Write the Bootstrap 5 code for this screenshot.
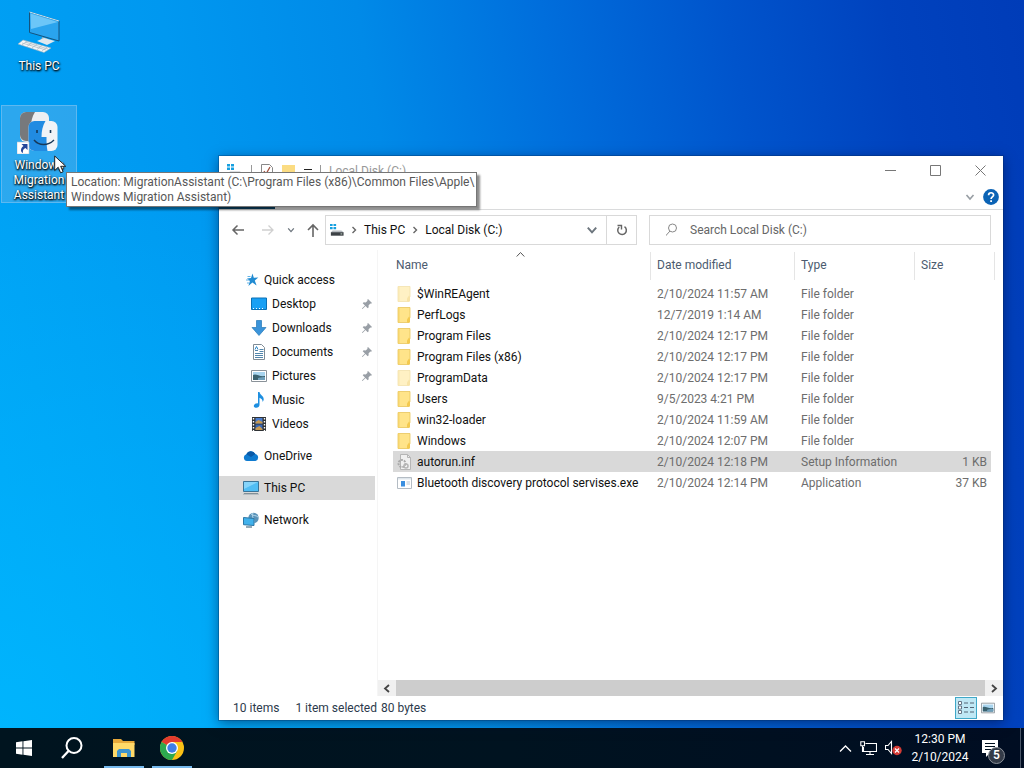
<!DOCTYPE html>
<html lang="en">
<head>
<meta charset="utf-8">
<meta name="viewport" content="width=device-width, initial-scale=1">
<title>Local Disk (C:)</title>
<link href="https://cdn.jsdelivr.net/npm/bootstrap@5.3.0/dist/css/bootstrap.min.css" rel="stylesheet">
<style>
:root{--ui:Roboto,"Open Sans",sans-serif}
body{font-family:var(--ui);font-size:12px;line-height:16px;color:#111;background:#0070d8;cursor:default}
button,input{font:inherit;color:inherit}
.plain{border:0;background:none;padding:0}
svg{display:block;flex:none}
a{color:inherit;text-decoration:none}
.desktop{background:
 radial-gradient(ellipse 65% 80% at 0% 100%,rgba(0,186,255,.75),rgba(0,186,255,0) 100%),
 linear-gradient(80deg,#00a4f6 0%,#0098f0 25%,#008ae8 42%,#006edc 58%,#0054cc 74%,#0042be 88%,#003cb8 100%)}
.launcher{width:76px;margin:0 0 0 1px;padding:6px 0 0;height:98px;border:1px solid transparent;color:#fff;line-height:15px;text-shadow:0 1px 2px #000,1px 1px 2px #000;text-align:center;display:flex;flex-direction:column;align-items:center;gap:4px}
.launcher:first-child{margin-top:4px;gap:6px}
.launcher.chosen{margin-top:3px;border-color:#5db8f0;background:rgba(110,180,230,.4)}
.explorer{left:219px;right:21px;top:156px;bottom:8px;background:#fff;box-shadow:0 0 0 1px rgba(0,40,90,.3),0 3px 12px rgba(0,10,50,.5)}
.caption-bar{height:29px;color:#999}
.caption-bar .sys{width:45px;height:28px}
.ribbon{height:25px;border-bottom:1px solid #dadbdc}
.file-tab{width:56px;background:#0b4a70}
.tools{height:40px}
.address,.search{height:30px;border:1px solid #d9d9d9}
.address{width:312px}
.search{min-width:0;margin:0 12px}
.search input{border:0;outline:0;background:none;min-width:0}
.search input::placeholder{color:#666;opacity:1}
.reload{width:30px;border-left:1px solid #d9d9d9!important}
.side{width:159px;border-right:1px solid #f5f5f5;padding-top:18px}
.side a{height:24px;width:156px;padding-left:24px;gap:5px}
.side a.sub{padding-left:32px}
.side a.here{background:#d9d9d9}
.side .pin{margin-left:auto;margin-right:2px}
.files{margin:0 12px 0 15px;padding-top:2px}
.files table{table-layout:fixed;width:100%;border-collapse:separate;border-spacing:0}
.files th{height:28px;font-weight:400;color:#4c5b6f;padding:0 0 2px 6px;border-left:1px solid #e5e5e5;line-height:16px}
.files th:first-child{padding-left:3px;border-left:0;position:relative}
.files th:last-child{position:relative}
.files th:last-child::after{content:"";position:absolute;right:-4px;top:0;height:28px;border-right:1px solid #e5e5e5}
.sort{position:absolute;left:123px;top:0}
.files td{height:21px;padding:0 0 0 7px;color:#6d6d6d;white-space:nowrap}
.files td:first-child{color:#111;padding-left:3px}
.files td:last-child{text-align:right;padding-right:4px}
.files tr.picked td{background:#d9d9d9}
.files tbody::before{content:"";display:block;height:3px}
.scroller{height:16px;background:#f0f0f0}
.scroller .thumb{background:#cdcdcd}
.scroller button{width:18px}
.foot{height:24px;color:#2c3a4c;padding-left:14px}
.view{width:22px;height:22px}
.view.on{border:1px solid #3fa8c8;background:#bfe8f5}
.tip{left:66px;top:172px;width:411px;height:35px;background:#fff;border:1px solid #767676;color:#575757;padding:2px 4px;line-height:15px;box-shadow:3px 3px 2px rgba(0,0,0,.45);z-index:3}
.pointer{left:54px;top:155px;z-index:4}
.taskbar{height:40px;background:linear-gradient(90deg,#00141f,#001320 50%,#000d22);color:#fff}
.task{width:40px;height:40px;display:flex;align-items:center;justify-content:center}
.task.open{box-shadow:inset 0 -2px #76b9ed}
.clock{line-height:18px;text-align:center;width:60px}
.note{position:relative;width:34px;height:40px}
.tally{position:absolute;left:10px;top:19px;width:17px;height:17px;border-radius:50%;background:#333b48;border:1px solid #8c929a;line-height:15px;text-align:center;font-weight:600}
.peek{border-left:1px solid #4a5668;width:4px;height:40px}
</style>
</head>
<body class="vh-100 overflow-hidden d-flex flex-column">

<svg width="0" height="0" class="position-absolute" aria-hidden="true">
 <symbol id="folder" viewBox="0 0 16 16"><path d="M1.500 .5h12v10l-1 1v4h-11z" fill="#ffe48a" stroke="#e8c55c" stroke-width=".8"/><path d="M1.500 .5h1.500v15H1.500z" fill="#f5d36b"/><path d="M12.500 9.500l1 1v5h-3v-3z" fill="#f3c94f"/></symbol>
 <symbol id="chev" viewBox="0 0 8 8"><path d="M2.500 1l3 3-3 3" fill="none" stroke="#666" stroke-width="1.400"/></symbol>
 <symbol id="down" viewBox="0 0 10 10"><path d="M1.500 3l3.500 4 3.500-4" fill="none" stroke="currentColor" stroke-width="1.600"/></symbol>
 <symbol id="pin" viewBox="0 0 12 12"><path d="M7 1l4 4-1 .8-.7-.2L7.500 7.400l.2 1.900-1 1L4.500 8 1.500 11l-.6-.5L4 7.500 1.700 5.200l1-.9 2 .2 1.900-1.800L6.200 1.900z" fill="#999fa6"/></symbol>
 <symbol id="drive" viewBox="0 0 16 16"><path d="M0 1h3v2.500H0zM4 1h3v2.500H4zM0 4.500h3V7H0zM4 4.500h3V7H4z" fill="#16a0e0"/><path d="M3 8.500h10l2.500 2H1z" fill="#b6bbc0"/><path d="M1 10.500h14.500v4H1z" fill="#3c4145"/><path d="M12 12h2v1h-2z" fill="#d8eadb"/></symbol>
 <symbol id="photo" viewBox="0 0 16 12"><path d="M.5.500h15v11H.5z" fill="#fff" stroke="#8a9299"/><path d="M2 2h12v8H2z" fill="#a8d4ee"/><path d="M2 5c3-2 6 2 12 1v4H2z" fill="#39616f"/><path d="M7 8c3-1 5-1 7-1v3H7z" fill="#6d9eba"/></symbol>
</svg>

<main class="desktop flex-grow-1 position-relative d-flex flex-column">
 <button class="plain launcher">
  <svg width="44" height="42" viewBox="0 0 44 42"><path d="M12.500 1l29.500 9v20l-29.500-8.500z" fill="#2aa4ee" stroke="#14537e"/><path d="M13.500 2.500l27.500 8.500L14 18z" fill="#6cc6f8"/><path d="M12.500 1l29.500 9" stroke="#c8e8f8"/><path d="M25 26l6 2v3l-7-1z" fill="#9fb0ba"/><path d="M20 30l7-3 11 3-8 4z" fill="#dfe8ee"/><path d="M1 33l5-4 28 8-7 4.500z" fill="#f5f7f8" stroke="#9bb0bf" stroke-width=".6"/><path d="M5 32l24 7M8 31l23 7M10 30l-5 4M15 31.500l-5 4M20 33l-5 4M25 34.500l-5 4M30 36l-5 4" stroke="#a7b6c0" stroke-width=".7"/></svg>
  <span>This PC</span></button>
 <button class="plain launcher chosen">
  <svg width="44" height="42" viewBox="0 0 44 42"><rect x="3" y="0" width="29" height="30" rx="6" fill="#eceff2"/><path d="M9 0h9c-3 5-4 9-4 15h4v14H9a6 6 0 0 1-6-6V6a6 6 0 0 1 6-6z" fill="#77797c"/><rect x="11.500" y="9" width="29" height="30" rx="6" fill="#f0f3f7"/><path d="M17.500 9h11c-3 5-4 10-4 16h5c0 5 0 9 1 14H17.500a6 6 0 0 1-6-6V15a6 6 0 0 1 6-6z" fill="#218be2"/><path d="M20 18v3M33.500 18v3" stroke="#173858" stroke-width="1.600"/><path d="M17 28c5 6 14 6 20 0" fill="none" stroke="#173858" stroke-width="1.400"/><path d="M0 30h12v12H0z" fill="#fff" stroke="#b5c0cc" stroke-width=".6"/><path d="M4.500 32h6v6l-2-2c-2 1-3 2-2.500 5C3 40 3.500 36 6.500 34z" fill="#24469a"/></svg>
  <span>Windows<br>Migration<br>Assistant</span></button>

 <section class="explorer position-absolute d-flex flex-column" aria-label="Local Disk (C:)">
  <header class="caption-bar d-flex align-items-center">
   <svg class="ms-2" width="16" height="16"><use href="#drive"/></svg>
   <svg class="ms-2" width="1" height="12"><path d="M0 0h1v12H0z" fill="#999"/></svg>
   <svg class="ms-2" width="14" height="16" viewBox="0 0 14 16"><path d="M1.500 1.500h8l3 3v10h-11z" fill="#fff" stroke="#888"/><path d="M4 8l2 3 4-7" fill="none" stroke="#a34f3c" stroke-width="1.300"/></svg>
   <svg class="ms-2" width="14" height="14" viewBox="0 0 14 14"><path d="M0 1h13v12H0z" fill="#fbdc82"/></svg>
   <svg class="ms-2" width="8" height="8" viewBox="0 0 8 8"><path d="M0 2h8v1H0zM1 5h6L4 8z" fill="#222"/></svg>
   <svg class="ms-2" width="1" height="12"><path d="M0 0h1v12H0z" fill="#999"/></svg>
   <span class="ms-2">Local Disk (C:)</span>
   <div class="ms-auto d-flex">
    <button class="plain sys" aria-label="Minimize"><svg class="m-auto" width="11" height="11"><path d="M0 5.500h11" stroke="#777"/></svg></button>
    <button class="plain sys" aria-label="Maximize"><svg class="m-auto" width="11" height="11"><path d="M.5.500h10v10H.5z" fill="none" stroke="#777"/></svg></button>
    <button class="plain sys" aria-label="Close"><svg class="m-auto" width="11" height="11"><path d="M.5.500l10 10M10.500.500l-10 10" stroke="#777"/></svg></button>
   </div>
  </header>
  <div class="ribbon d-flex">
   <div class="file-tab"></div>
   <div class="ms-auto d-flex align-items-center gap-2 pe-1">
    <button class="plain text-secondary" aria-label="Expand ribbon"><svg width="10" height="10" opacity=".7"><use href="#down"/></svg></button>
    <button class="plain" aria-label="Help"><svg width="16" height="16" viewBox="0 0 16 16"><circle cx="8" cy="8" r="7.900" fill="#0b63b5"/><path d="M5.600 6.200c0-3.200 5-3.200 5-.2 0 2-2.500 1.900-2.500 4" fill="none" stroke="#fff" stroke-width="1.700"/><path d="M7.200 11.200h1.800V13H7.200z" fill="#fff"/></svg></button>
   </div>
  </div>
  <div class="tools d-flex align-items-center">
   <button class="plain ms-2 ps-1" aria-label="Back"><svg width="14" height="14" viewBox="0 0 14 14"><path d="M13 7H2M6.500 2.500L2 7l4.500 4.500" fill="none" stroke="#666" stroke-width="1.500"/></svg></button>
   <button class="plain ms-3" aria-label="Forward"><svg width="14" height="14" viewBox="0 0 14 14"><path d="M1 7h11M7.500 2.500L12 7l-4.500 4.500" fill="none" stroke="#d0d0d0" stroke-width="1.300"/></svg></button>
   <button class="plain ms-2 ps-1 text-secondary" aria-label="Recent"><svg width="8" height="8"><use href="#down"/></svg></button>
   <button class="plain ms-2 ps-1" aria-label="Up"><svg width="14" height="14" viewBox="0 0 14 14"><path d="M6 14V2M1 7l5-5 5 5" fill="none" stroke="#666" stroke-width="1.600"/></svg></button>
   <nav class="address d-flex align-items-center ms-1" aria-label="Address">
    <svg class="ms-1" width="14" height="16"><use href="#drive"/></svg>
    <svg class="ms-1" width="12" height="8"><use href="#chev"/></svg>
    <a href="#" class="ms-1">This PC</a>
    <svg class="ms-1" width="12" height="8"><use href="#chev"/></svg>
    <a href="#" class="ms-1">Local Disk (C:)</a>
    <button class="plain ms-auto me-2 text-secondary" aria-label="Previous locations"><svg width="12" height="12"><use href="#down"/></svg></button>
    <button class="plain reload h-100" aria-label="Refresh"><svg class="m-auto" width="12" height="12" viewBox="0 0 12 12"><path d="M3.200 3A4.300 4.300 0 1 0 8.500 2.700" fill="none" stroke="#666" stroke-width="1.500"/><path d="M1.500 1.500h4v4" fill="none" stroke="#666" stroke-width="1.400"/></svg></button>
   </nav>
   <label class="search flex-grow-1 d-flex align-items-center px-3 gap-2">
    <svg width="14" height="14" viewBox="0 0 14 14"><circle cx="6.500" cy="5" r="4" fill="none" stroke="#888"/><path d="M4 8L-.5 13" stroke="#888"/></svg>
    <input class="flex-grow-1" type="search" placeholder="Search Local Disk (C:)" aria-label="Search Local Disk (C:)">
   </label>
  </div>
  <div class="d-flex flex-grow-1">
   <nav class="side flex-shrink-0" aria-label="Folders">
    <a href="#" class="d-flex align-items-center"><svg width="16" height="16" viewBox="0 0 16 16"><path d="M9.500 1.500l1.300 4.200 4.500-.1-3.500 3 1.800 4.800-4.200-2.800-4 3.400 1.500-5L4 6.400l4-.3z" fill="#218bd2"/><path d="M3 8h3M4 11h2M4.500 4.500h3" stroke="#64b4e8"/></svg>Quick access</a>
    <a href="#" class="sub d-flex align-items-center"><svg width="16" height="14" viewBox="0 0 16 14"><path d="M.5 1h15v11.500H.5z" fill="#19a0f4" stroke="#0a70b5"/><path d="M2 11.500h12" stroke="#fff" stroke-dasharray="1 2"/></svg><span>Desktop</span><svg class="pin" width="12" height="12"><use href="#pin"/></svg></a>
    <a href="#" class="sub d-flex align-items-center"><svg width="16" height="16" viewBox="0 0 16 16"><path d="M5.500.500h5v7h4.500L8 15.500 1 7.500h4.500z" fill="#3b94da" stroke="#2478b8" stroke-width=".7"/></svg><span>Downloads</span><svg class="pin" width="12" height="12"><use href="#pin"/></svg></a>
    <a href="#" class="sub d-flex align-items-center"><svg width="16" height="16" viewBox="0 0 16 16"><path d="M2.500.500h8l3 3v12h-11z" fill="#fff" stroke="#7f8c96"/><path d="M4 6.500h3M4 9.500h8M4 11.500h8M4 13.500h8M8.500 5.500h4M8.500 7.500h4" stroke="#5286ac"/><path d="M4 5.500l1.500-3L7 5.500" fill="none" stroke="#2a86c8"/></svg><span>Documents</span><svg class="pin" width="12" height="12"><use href="#pin"/></svg></a>
    <a href="#" class="sub d-flex align-items-center"><svg width="16" height="12"><use href="#photo"/></svg><span>Pictures</span><svg class="pin" width="12" height="12"><use href="#pin"/></svg></a>
    <a href="#" class="sub d-flex align-items-center"><svg width="16" height="16" viewBox="0 0 16 16"><path d="M7 0h1.500c.5 3 4.500 4 4.200 7.500-.1 1.200-.7 2-1.200 2.600.4-2-.8-3.600-3-4.400V13c0 1.600-1.500 2.800-3.200 2.800C3.800 15.800 2.800 15 2.800 14c0-1.700 2-3 4.200-2.600z" fill="#1e8fe0"/></svg><span>Music</span></a>
    <a href="#" class="sub d-flex align-items-center"><svg width="16" height="16" viewBox="0 0 16 16"><path d="M1 1h14v14H1z" fill="#2f3235"/><path d="M2.500 2v13M13.500 2v13" stroke="#fff" stroke-width="1.400" stroke-dasharray="1.500 1.500"/><path d="M4.500 2h7v5.500h-7z" fill="#4b7ed0"/><path d="M4.500 8.500h7V14h-7z" fill="#3868b8"/><path d="M4.500 6l3-2 4 2v1.500h-7zM4.500 12l4-2 3 3v1h-7z" fill="#c99a50"/></svg><span>Videos</span></a>
    <a href="#" class="d-flex align-items-center mt-2"><svg width="16" height="12" viewBox="0 0 16 12"><path d="M4 11a3.500 3.500 0 0 1-.7-6.800A5 5 0 0 1 12.300 4 3.600 3.600 0 0 1 12.500 11z" fill="#0f7bd0"/><path d="M3.300 4.200A5 5 0 0 1 12.300 4L8 7z" fill="#0a5aa8"/></svg>OneDrive</a>
    <a href="#" class="here d-flex align-items-center mt-2"><svg width="16" height="16" viewBox="0 0 16 16"><path d="M.5 1.500h15v10H.5z" fill="#50bdf4" stroke="#3a7397"/><path d="M1 2h14L1 9z" fill="#85d4fa"/><path d="M0 13.500h16v1.500H0z" fill="#b8bec2"/><path d="M1 13.500h14" stroke="#617480" stroke-width=".7"/></svg>This PC</a>
    <a href="#" class="d-flex align-items-center mt-2"><svg width="16" height="16" viewBox="0 0 16 16"><circle cx="10.500" cy="6" r="5.200" fill="#5b93b8"/><path d="M8 2c2 2 5 1 7 3M10 1c-2 4 2 6 1 10" stroke="#b4d8ec" fill="none"/><path d="M.5 5.500l10.500 1v7l-10.500-.8z" fill="#42b2ec" stroke="#2c77a6"/><path d="M3 15h6" stroke="#5c7c90" stroke-width="1.300"/></svg>Network</a>
   </nav>
   <div class="flex-grow-1 d-flex flex-column">
    <div class="files flex-grow-1">
     <table>
      <colgroup><col><col style="width:144px"><col style="width:120px"><col style="width:77px"></colgroup>
      <thead><tr><th scope="col">Name<svg class="sort" width="9" height="5" viewBox="0 0 9 5"><path d="M.7 4.500l3.800-4 3.800 4" fill="none" stroke="#555"/></svg></th><th scope="col">Date modified</th><th scope="col">Type</th><th scope="col">Size</th></tr></thead>
      <tbody>
       <tr><td><span class="d-flex align-items-center gap-1"><svg width="17" height="16" opacity=".5"><use href="#folder"/></svg>$WinREAgent</span></td><td>2/10/2024 11:57 AM</td><td>File folder</td><td></td></tr>
       <tr><td><span class="d-flex align-items-center gap-1"><svg width="17" height="16"><use href="#folder"/></svg>PerfLogs</span></td><td>12/7/2019 1:14 AM</td><td>File folder</td><td></td></tr>
       <tr><td><span class="d-flex align-items-center gap-1"><svg width="17" height="16"><use href="#folder"/></svg>Program Files</span></td><td>2/10/2024 12:17 PM</td><td>File folder</td><td></td></tr>
       <tr><td><span class="d-flex align-items-center gap-1"><svg width="17" height="16"><use href="#folder"/></svg>Program Files (x86)</span></td><td>2/10/2024 12:17 PM</td><td>File folder</td><td></td></tr>
       <tr><td><span class="d-flex align-items-center gap-1"><svg width="17" height="16" opacity=".5"><use href="#folder"/></svg>ProgramData</span></td><td>2/10/2024 12:17 PM</td><td>File folder</td><td></td></tr>
       <tr><td><span class="d-flex align-items-center gap-1"><svg width="17" height="16"><use href="#folder"/></svg>Users</span></td><td>9/5/2023 4:21 PM</td><td>File folder</td><td></td></tr>
       <tr><td><span class="d-flex align-items-center gap-1"><svg width="17" height="16"><use href="#folder"/></svg>win32-loader</span></td><td>2/10/2024 11:59 AM</td><td>File folder</td><td></td></tr>
       <tr><td><span class="d-flex align-items-center gap-1"><svg width="17" height="16"><use href="#folder"/></svg>Windows</span></td><td>2/10/2024 12:07 PM</td><td>File folder</td><td></td></tr>
       <tr class="picked"><td><span class="d-flex align-items-center gap-1"><svg width="17" height="16" viewBox="0 0 17 16"><path d="M4.500.500h7l3 3v12h-10z" fill="#f0f0f0" stroke="#b5b5b5"/><path d="M11.500.500v3h3" fill="none" stroke="#b5b5b5"/><circle cx="6" cy="9.500" r="3.500" fill="none" stroke="#a9a9a9" stroke-width="2" stroke-dasharray="2 1"/><circle cx="10" cy="12" r="2" fill="none" stroke="#b5b5b5" stroke-width="1.500"/></svg>autorun.inf</span></td><td>2/10/2024 12:18 PM</td><td>Setup Information</td><td>1 KB</td></tr>
       <tr><td><span class="d-flex align-items-center gap-1"><svg width="17" height="16" viewBox="0 0 17 16"><path d="M1.500 2.500h14v11h-14z" fill="#fff" stroke="#b4bcc4"/><path d="M2 3h13v1.500H2z" fill="#dfe6ec"/><path d="M5 6h4v5.500H5z" fill="#3b8fe0"/><path d="M10.500 7h3.500M10.500 9h3.500" stroke="#b9c6d4"/></svg>Bluetooth discovery protocol servises.exe</span></td><td>2/10/2024 12:14 PM</td><td>Application</td><td>37 KB</td></tr>
      </tbody>
     </table>
    </div>
    <div class="scroller d-flex">
     <button class="plain" aria-label="Scroll left"><svg class="m-auto" width="8" height="9" viewBox="0 0 8 9"><path d="M6 1L2 4.500 6 8" fill="none" stroke="#444" stroke-width="1.800"/></svg></button>
     <div class="thumb flex-grow-1"></div>
     <button class="plain" aria-label="Scroll right"><svg class="m-auto" width="8" height="9" viewBox="0 0 8 9"><path d="M2 1l4 3.500L2 8" fill="none" stroke="#444" stroke-width="1.800"/></svg></button>
    </div>
   </div>
  </div>
  <footer class="foot d-flex align-items-center">
   <span>10 items</span><span class="ms-3">1 item selected</span><span class="ms-1">80 bytes</span>
   <button class="plain view on ms-auto" aria-label="Details view"><svg class="m-auto" width="16" height="14" viewBox="0 0 16 14"><path d="M.5.500h3v3h-3zM.5 5h3v3h-3zM.5 9.500h3v3h-3z" fill="#fff" stroke="#678"/><path d="M6 2h4M12 2h4M6 6.500h4M12 6.500h4M6 11h4M12 11h4" stroke="#567"/></svg></button>
   <button class="plain view me-1" aria-label="Large icons view"><svg class="m-auto" width="14" height="12"><use href="#photo"/></svg></button>
  </footer>
 </section>

 <div class="tip position-absolute text-nowrap" role="tooltip">Location: MigrationAssistant (C:\Program Files (x86)\Common Files\Apple\<br>Windows Migration Assistant)</div>
 <svg class="pointer position-absolute" width="13" height="19" viewBox="0 0 13 19" aria-hidden="true"><path d="M.7 1v14.500l3.500-3.300 2.400 5.600 2.500-1-2.400-5.500h5z" fill="#fff" stroke="#111" stroke-width=".9"/></svg>
</main>

<footer class="taskbar d-flex align-items-center flex-shrink-0">
 <button class="plain task ms-1" aria-label="Start"><svg width="16" height="16" viewBox="0 0 16 16"><path d="M0 2.200L6.500 1.300v6.200H0zM7.400 1.200L16 0v7.500H7.400zM0 8.400h6.500v6.300L0 13.800zM7.400 8.400H16V16l-8.600-1.200z" fill="#fff"/></svg></button>
 <button class="plain task ms-2 me-1" aria-label="Search"><svg width="24" height="24" viewBox="0 0 24 24"><circle cx="14" cy="9.500" r="7.500" fill="none" stroke="#fff" stroke-width="2"/><path d="M8.500 15L2 22" stroke="#fff" stroke-width="2.300"/></svg></button>
 <button class="plain task open ms-2 me-2" aria-label="File Explorer: Local Disk (C:)"><svg width="22" height="20" viewBox="0 0 22 20"><path d="M0 1h8l2 2h11.500v4H0z" fill="#e7a93a"/><path d="M0 5h21.500v14H0z" fill="#ffd968"/><path d="M4 19v-6l2-2h10l2 2v6h-4v-4H8v4z" fill="#3d94cf"/></svg></button>
 <button class="plain task open" aria-label="Google Chrome"><svg width="24" height="24" viewBox="0 0 24 24"><circle cx="12" cy="12" r="12" fill="#fbc116"/><path d="M12 12L1.600 6A12 12 0 0 1 22.400 6z" fill="#e33b2e"/><path d="M1.600 6A12 12 0 0 0 12 24l5.200-9-5.200-3z" fill="#2da94f"/><path d="M12 6h10.400L17.200 15 12 12z" fill="#fbc116"/><circle cx="12" cy="12" r="6" fill="#fff"/><circle cx="12" cy="12" r="4.700" fill="#3f7ee8"/></svg></button>
 <div class="ms-auto d-flex align-items-center">
  <button class="plain me-2" aria-label="Show hidden icons"><svg width="13" height="9" viewBox="0 0 13 9"><path d="M1 7.500L6.500 2 12 7.500" fill="none" stroke="#fff" stroke-width="1.300"/></svg></button>
  <svg class="me-2" width="17" height="15" viewBox="0 0 17 15"><path d="M5.500 2.500h11v8h-13V6M10 10.500v3M6 13.500h8" fill="none" stroke="#fff" stroke-width="1.100"/><path d="M.8.800h3.700v4H.8zM2.500 5v6" fill="none" stroke="#fff" stroke-width="1.100"/></svg>
  <svg class="me-2" width="17" height="16" viewBox="0 0 17 16"><path d="M.5 5.500h2.500l3.500-4v12L3 9.500H.5z" fill="none" stroke="#fff" stroke-width="1.100"/><circle cx="12" cy="10.500" r="4.700" fill="#d43b35"/><path d="M10 8.500l4 4M14 8.500l-4 4" stroke="#fff" stroke-width="1.200"/></svg>
  <div class="clock">12:30 PM<br>2/10/2024</div>
  <button class="plain note ms-2 me-2 ps-1" aria-label="Notifications"><svg width="17" height="17" viewBox="0 0 17 17"><path d="M0 0h16v13H8l-4 4v-4H0z" fill="#fff"/><path d="M3 3.500h10M3 6.500h10M3 9.500h7" stroke="#00101f" stroke-width="1.200"/></svg><span class="tally">5</span></button>
  <div class="peek"></div>
 </div>
</footer>
<script src="https://cdn.jsdelivr.net/npm/bootstrap@5.3.0/dist/js/bootstrap.bundle.min.js"></script>
</body>
</html>
